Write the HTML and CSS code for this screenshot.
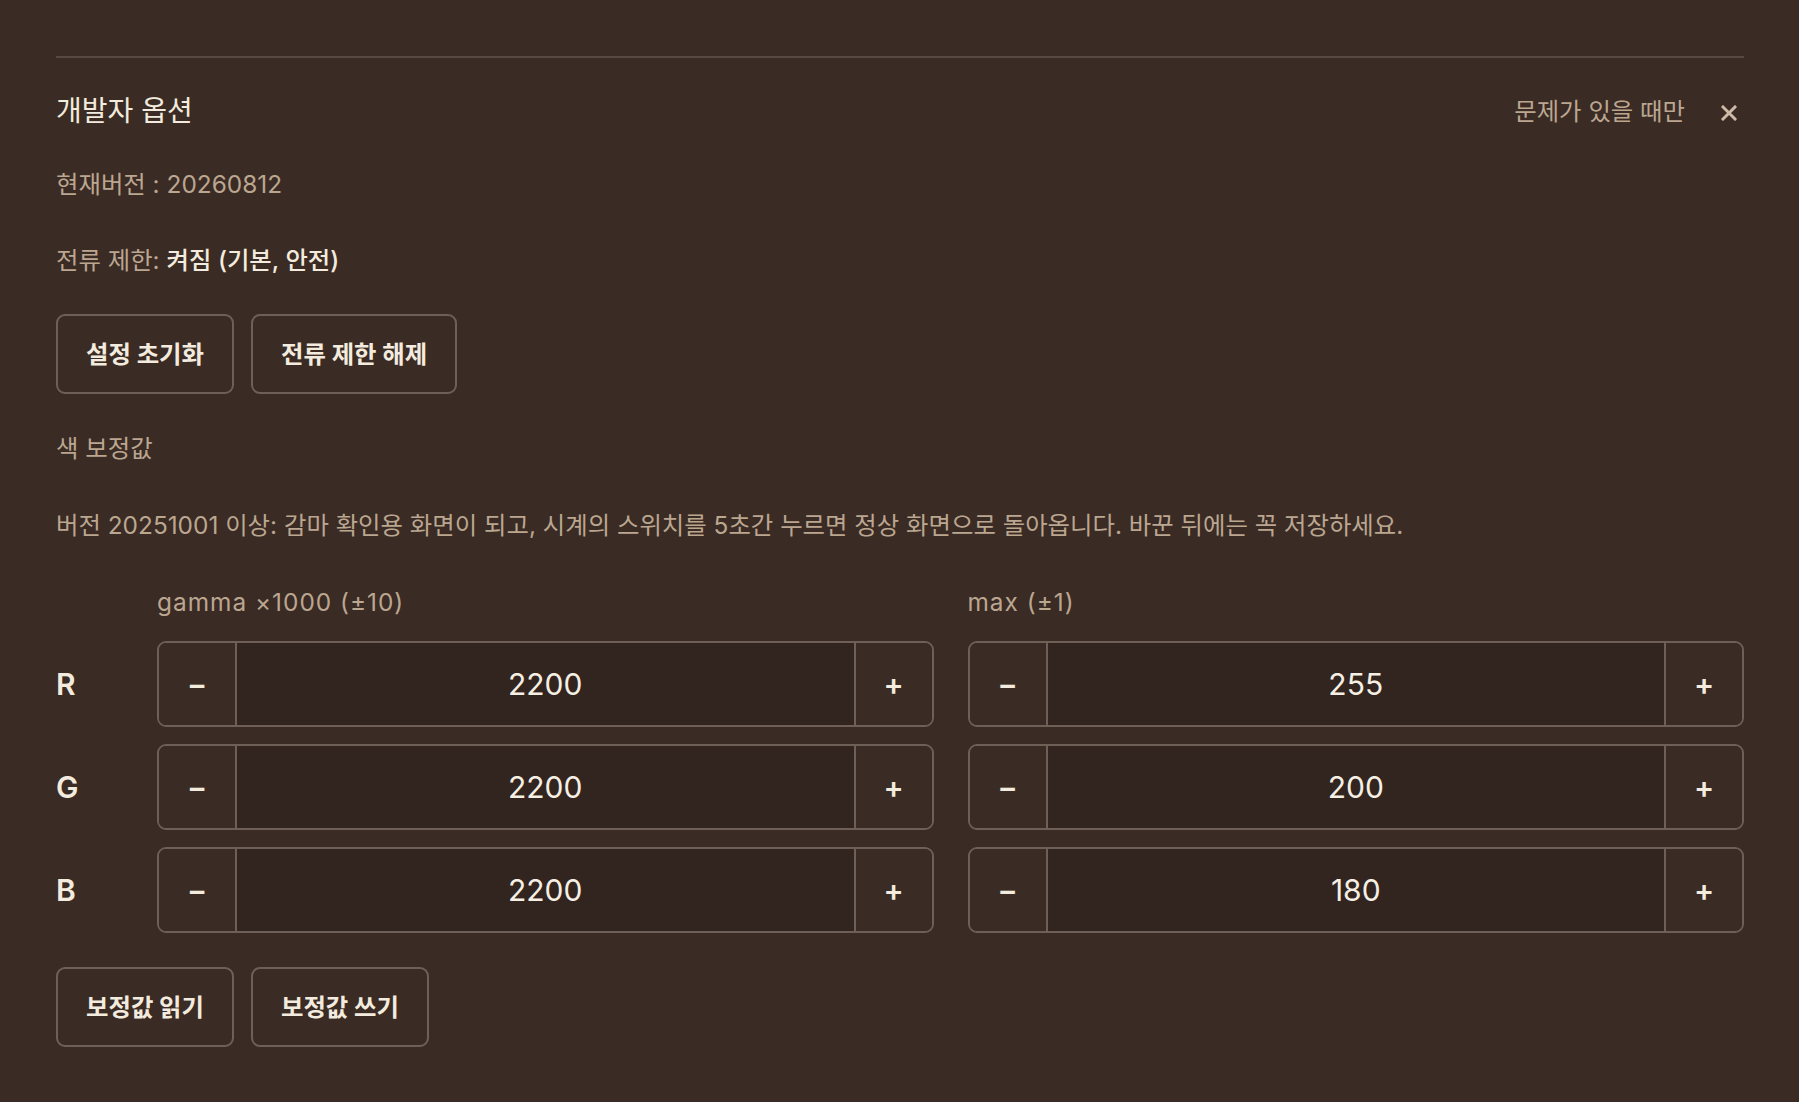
FILE: index.html
```html
<!DOCTYPE html>
<html lang="ko">
<head>
<meta charset="utf-8">
<title>개발자 옵션</title>
<link rel="stylesheet" href="styles.css">
</head>
<body>
<div class="page">
  <section class="panel">
    <div class="header">
      <h2 class="title">개발자 옵션</h2>
      <div class="header-right">
        <span class="muted">문제가 있을 때만</span>
        <button class="close" aria-label="닫기">
          <svg width="16" height="16" viewBox="0 0 16 16"><path d="M2 2 L14 14 M14 2 L2 14" stroke="currentColor" stroke-width="3" stroke-linecap="square" fill="none"/></svg>
        </button>
      </div>
    </div>

    <p class="line version muted">현재버전 : 20260812</p>
    <p class="line current"><span class="muted">전류 제한:</span> <span class="strong">켜짐 (기본, 안전)</span></p>

    <div class="btn-row first">
      <button class="btn">설정 초기화</button>
      <button class="btn">전류 제한 해제</button>
    </div>

    <p class="line section-label muted">색 보정값</p>
    <p class="line note muted">버전 20251001 이상: 감마 확인용 화면이 되고, 시계의 스위치를 5초간 누르면 정상 화면으로 돌아옵니다. 바꾼 뒤에는 꼭 저장하세요.</p>

    <div class="grid">
      <div></div>
      <div class="col-label muted">gamma ×1000 (±10)</div>
      <div class="col-label muted">max (±1)</div>

      <div class="ch">R</div>
      <div class="stepper"><button class="step">−</button><div class="val">2200</div><button class="step">+</button></div>
      <div class="stepper"><button class="step">−</button><div class="val">255</div><button class="step">+</button></div>

      <div class="ch">G</div>
      <div class="stepper"><button class="step">−</button><div class="val">2200</div><button class="step">+</button></div>
      <div class="stepper"><button class="step">−</button><div class="val">200</div><button class="step">+</button></div>

      <div class="ch">B</div>
      <div class="stepper"><button class="step">−</button><div class="val">2200</div><button class="step">+</button></div>
      <div class="stepper"><button class="step">−</button><div class="val">180</div><button class="step">+</button></div>
    </div>

    <div class="btn-row last">
      <button class="btn">보정값 읽기</button>
      <button class="btn">보정값 쓰기</button>
    </div>
  </section>
</div>
</body>
</html>
```

FILE: styles.css
```css
* { box-sizing: border-box; }

html, body {
  margin: 0;
  padding: 0;
  background: #3a2b25;
}

body {
  font-family: "Inter", "Noto Sans CJK KR", sans-serif;
  font-size: 24.4px;
  line-height: 32px;
  color: #f3ebde;
}

.page {
  padding: 56px 55px 0 56px;
}

.panel {
  border-top: 2px solid #594940;
}

.muted { color: #bba690; }
.strong { color: #f3ebde; font-weight: 500; }

.header {
  display: flex;
  align-items: center;
  justify-content: space-between;
  margin-top: 35px;
  height: 36px;
}

.title {
  margin: 0;
  font-size: 28px;
  line-height: 36px;
  font-weight: 400;
  color: #f3ebde;
}

.header-right {
  display: flex;
  align-items: center;
  gap: 29px;
}

.close {
  width: 30px;
  height: 30px;
  padding: 0;
  border: none;
  background: none;
  color: #cdbba8;
  display: flex;
  align-items: center;
  justify-content: center;
  margin-top: 4px;
}

.line { margin: 0; }
.version { margin-top: 39px; }
.current { margin-top: 44px; }

.btn-row {
  display: flex;
  gap: 17px;
}
.btn-row.first { margin-top: 38px; }
.btn-row.last { margin-top: 34px; }

.btn {
  font-family: inherit;
  font-size: 24.4px;
  line-height: 30px;
  font-weight: 700;
  color: #f3ebde;
  background: transparent;
  border: 2px solid #6f6057;
  border-radius: 9px;
  padding: 23px 28px;
}

.section-label { margin-top: 38px; }
.note { margin-top: 45px; }

.grid {
  margin-top: 45px;
  display: grid;
  grid-template-columns: 67px 1fr 1fr;
  column-gap: 34px;
  row-gap: 17px;
  align-items: center;
}

.col-label {
  margin-bottom: 6px;
  letter-spacing: 1px;
}

.ch {
  font-size: 30px;
  font-weight: 600;
  color: #f3ebde;
}

.stepper {
  display: grid;
  grid-template-columns: 76px 1fr 76px;
  height: 86px;
  border: 2px solid #6f6057;
  border-radius: 9px;
  overflow: hidden;
}

.step {
  font-family: inherit;
  font-size: 30px;
  font-weight: 600;
  color: #f3ebde;
  background: #3a2b25;
  border: none;
  padding: 0;
}

.val {
  background: #32251f;
  border-left: 2px solid #6f6057;
  border-right: 2px solid #6f6057;
  display: flex;
  align-items: center;
  justify-content: center;
  font-size: 30px;
  color: #f6efe4;
}
```
